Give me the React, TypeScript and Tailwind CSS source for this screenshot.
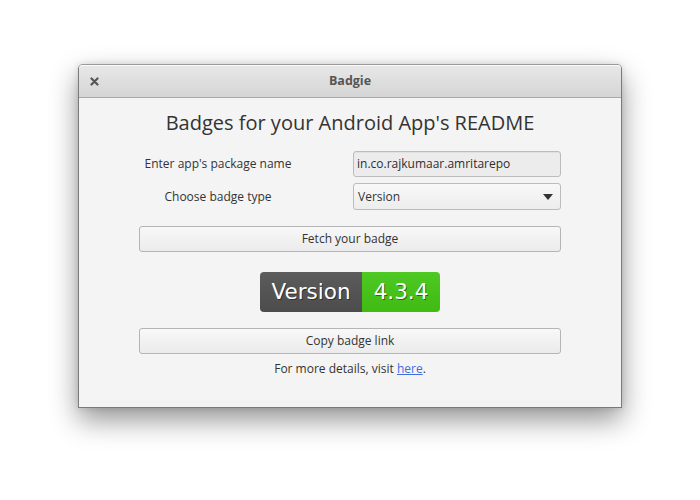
export default function App() {
    return (
        <div className="w-[700px] h-[500px] bg-white pt-[64px] pl-[78px]" style={{ fontFamily: '"Open Sans", "Liberation Sans", sans-serif' }}>
            <div className="w-[544px] h-[344px] flex flex-col rounded-t-[5px] border border-[#7a7a7a] border-t-[#9a9a9a] bg-[#f4f4f4] shadow-[0_12px_28px_rgba(0,0,0,0.42),0_0_6px_rgba(0,0,0,0.12)]">
                {/* title bar */}
                <div className="h-[33px] flex items-center relative rounded-t-[4px] bg-gradient-to-b from-[#e8e8e8] to-[#d5d5d5] border-b border-[#a9a9a9] shadow-[inset_0_1px_0_rgba(255,255,255,0.8)]">
                    <svg className="absolute left-[11px] top-[12px]" width="9" height="9" viewBox="0 0 9 9">
                        <path d="M1.5 1.5 L7.5 7.5 M7.5 1.5 L1.5 7.5" stroke="#555" strokeWidth="2.2" strokeLinecap="round" />
                    </svg>
                    <div className="flex-1 text-center text-[12.5px] font-bold text-[#555] leading-none">Badgie</div>
                </div>

                <div className="flex flex-col px-[60px]">
                    <h1 className="mt-[11px] text-center text-[20px] text-[#333] leading-[27px]">Badges for your Android App's README</h1>

                    <div className="mt-[15px] flex flex-col gap-[6px] text-[12px] text-[#333]">
                        <div className="flex items-center">
                            <div className="w-[158px] text-center whitespace-nowrap">Enter app's package name</div>
                            <div className="ml-[56px] w-[208px] h-[26px] flex items-center px-[3px] rounded-[3px] border border-[#bcbcbc] bg-[#ececec] text-[#2e2e2e] shadow-[inset_0_1px_1px_rgba(0,0,0,0.05)] whitespace-nowrap">
                                in.co.rajkumaar.amritarepo
                            </div>
                        </div>
                        <div className="flex items-center">
                            <div className="w-[158px] text-center whitespace-nowrap">Choose badge type</div>
                            <div className="ml-[56px] w-[208px] h-[27px] flex items-center justify-between pl-[4px] pr-[7px] rounded-[3px] border border-[#bcbcbc] bg-gradient-to-b from-[#f8f8f8] to-[#ededed]">
                                <span>Version</span>
                                <svg width="10" height="6" viewBox="0 0 10 6">
                                    <path d="M0 0 H10 L5 6 Z" fill="#333" />
                                </svg>
                            </div>
                        </div>
                    </div>

                    <button className="mt-[16px] h-[26px] w-full rounded-[3px] border border-[#b5b5b5] bg-gradient-to-b from-[#f8f8f8] to-[#ebebeb] text-[12px] text-[#333]">
                        Fetch your badge
                    </button>

                    <div className="mt-[20px] self-center flex h-[40px] rounded-[4px] overflow-hidden text-[21.5px] text-white" style={{ fontFamily: '"DejaVu Sans", Verdana, sans-serif', textShadow: '1px 1px 0 rgba(1,1,1,0.45)' }}>
                        <div className="w-[102px] flex items-center justify-center bg-gradient-to-b from-[#5c5c5c] to-[#4c4c4c]">Version</div>
                        <div className="w-[78px] flex items-center justify-center bg-gradient-to-b from-[#4ec822] to-[#40bb12]">4.3.4</div>
                    </div>

                    <button className="mt-[16px] h-[26px] w-full rounded-[3px] border border-[#b5b5b5] bg-gradient-to-b from-[#f8f8f8] to-[#ebebeb] text-[12px] text-[#333]">
                        Copy badge link
                    </button>

                    <p className="mt-[6px] text-center text-[12px] text-[#333] leading-[18px]">
                        For more details, visit <span className="text-[#3e6de0] underline">here</span>.
                    </p>
                </div>
            </div>
        </div>
    );
}
